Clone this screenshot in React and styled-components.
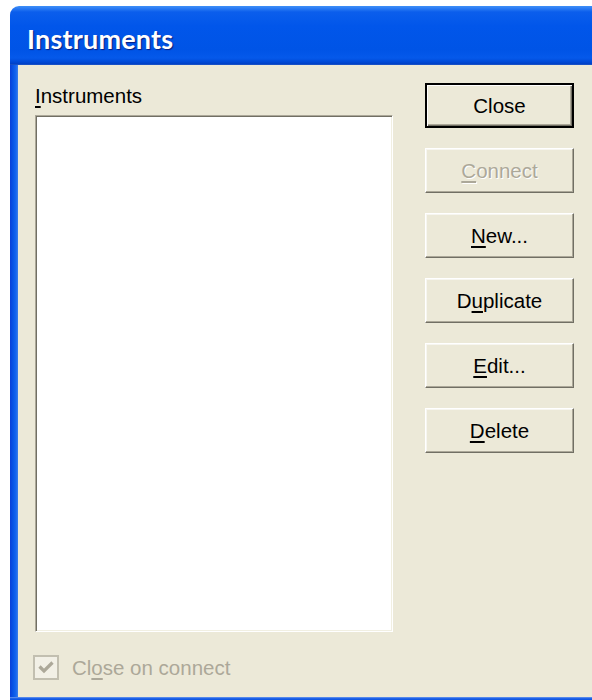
import React from "react";
import styled, { createGlobalStyle } from "styled-components";

const GlobalStyle = createGlobalStyle`
  html, body {
    margin: 0;
    padding: 0;
    background: #ffffff;
    overflow: hidden;
  }
`;

const Page = styled.div`
  width: 592px;
  height: 700px;
  padding: 6px 0 0 10px;
  box-sizing: border-box;
  overflow: hidden;
`;

const Window = styled.div`
  width: 592px;
  display: flex;
  flex-direction: column;
`;

const TitleBar = styled.div`
  height: 59px;
  box-sizing: border-box;
  padding: 16px 0 0 17px;
  border-radius: 9px 0 0 0;
  background: linear-gradient(
    to bottom,
    #3d8ff7 0px,
    #2f7ff4 2px,
    #0b5eec 6px,
    #0156ea 20px,
    #0054e6 44px,
    #0559ea 52px,
    #0049d6 56px,
    #0040c4 58px,
    #2d5fc8 59px
  );
  font-family: Lato, "Liberation Sans", sans-serif;
  font-weight: 700;
  font-size: 27px;
  letter-spacing: 0.2px;
  color: #ffffff;
  text-shadow: 1px 1px 1px #0a1e80;
`;

const Frame = styled.div`
  display: flex;
  background: linear-gradient(
    to right,
    #0a3fd8 0px,
    #0855e6 3px,
    #1666ef 6px,
    #3e7fe8 8px
  );
  padding-left: 8px;
`;

const BottomEdge = styled.div`
  height: 8px;
  background: linear-gradient(to bottom, #7fa6ee 0px, #2a6ae8 1px, #0650e3 3px, #0a3fd8 8px);
`;

const Body = styled.div`
  flex: 1;
  height: 632px;
  box-sizing: border-box;
  background: #ece9d8;
  display: grid;
  grid-template-columns: 358px 149px;
  column-gap: 32px;
  padding: 17px 0 0 17px;
  font-family: "Liberation Sans", Arial, sans-serif;
  font-size: 20.5px;
  color: #000000;
`;

const LeftColumn = styled.div`
  display: flex;
  flex-direction: column;
`;

const Label = styled.div`
  height: 33px;
  line-height: 28px;
`;

const Key = styled.span`
  text-decoration: underline;
  text-underline-offset: 3px;
`;

const ListBox = styled.div`
  height: 517px;
  box-sizing: border-box;
  background: #ffffff;
  border-style: solid;
  border-width: 1px;
  border-color: #aca899 #ffffff #ffffff #aca899;
  box-shadow: inset 1px 1px 0 #716f64, inset -1px -1px 0 #f1efe2;
`;

const CheckRow = styled.label`
  display: flex;
  align-items: center;
  gap: 13px;
  margin-top: 23px;
  margin-left: -2px;
  color: #aca899;
`;

const CheckBox = styled.span`
  width: 26px;
  height: 25px;
  box-sizing: border-box;
  border: 2px solid #c2bfb0;
  background: #f2f0e6;
  display: flex;
  align-items: center;
  justify-content: center;
`;

const ButtonColumn = styled.div`
  display: flex;
  flex-direction: column;
  gap: 20px;
  padding-top: 1px;
`;

const Button = styled.button`
  all: unset;
  width: 149px;
  height: 45px;
  box-sizing: border-box;
  display: flex;
  align-items: center;
  justify-content: center;
  background: #ece9d8;
  font-family: "Liberation Sans", Arial, sans-serif;
  font-size: 20.5px;
  border-style: solid;
  border-width: ${(p) => (p.$default ? "2px" : "1px")};
  border-color: ${(p) =>
    p.$default ? "#000000" : "#ffffff #716f64 #716f64 #ffffff"};
  box-shadow: ${(p) =>
    p.$default
      ? "inset 1px 1px 0 #ffffff, inset -1px -1px 0 #716f64, inset -2px -2px 0 #aca899"
      : "inset -1px -1px 0 #aca899, inset 1px 1px 0 #f7f6f0"};
  color: ${(p) => (p.disabled ? "#aca899" : "#000000")};
  text-shadow: ${(p) => (p.disabled ? "1px 1px 0 #ffffff" : "none")};
`;

const buttons = [
  { pre: "", key: "C", post: "onnect", disabled: true },
  { pre: "", key: "N", post: "ew..." },
  { pre: "D", key: "u", post: "plicate" },
  { pre: "", key: "E", post: "dit..." },
  { pre: "", key: "D", post: "elete" },
];

export default function App() {
  return (
    <Page>
      <GlobalStyle />
      <Window>
        <TitleBar>Instruments</TitleBar>
        <Frame>
          <Body>
            <LeftColumn>
              <Label>
                <Key>I</Key>nstruments
              </Label>
              <ListBox />
              <CheckRow>
                <CheckBox>
                  <svg width="18" height="17" viewBox="0 0 18 17">
                    <path
                      d="M2.5 7.5 L7 12 L15.5 3.5"
                      fill="none"
                      stroke="#aca899"
                      strokeWidth="3.2"
                    />
                  </svg>
                </CheckBox>
                <span>
                  Cl<Key>o</Key>se on connect
                </span>
              </CheckRow>
            </LeftColumn>
            <ButtonColumn>
              <Button $default>Close</Button>
              {buttons.map((b) => (
                <Button key={b.pre + b.key + b.post} disabled={b.disabled}>
                  {b.pre}
                  <Key>{b.key}</Key>
                  {b.post}
                </Button>
              ))}
            </ButtonColumn>
          </Body>
        </Frame>
        <BottomEdge />
      </Window>
    </Page>
  );
}
